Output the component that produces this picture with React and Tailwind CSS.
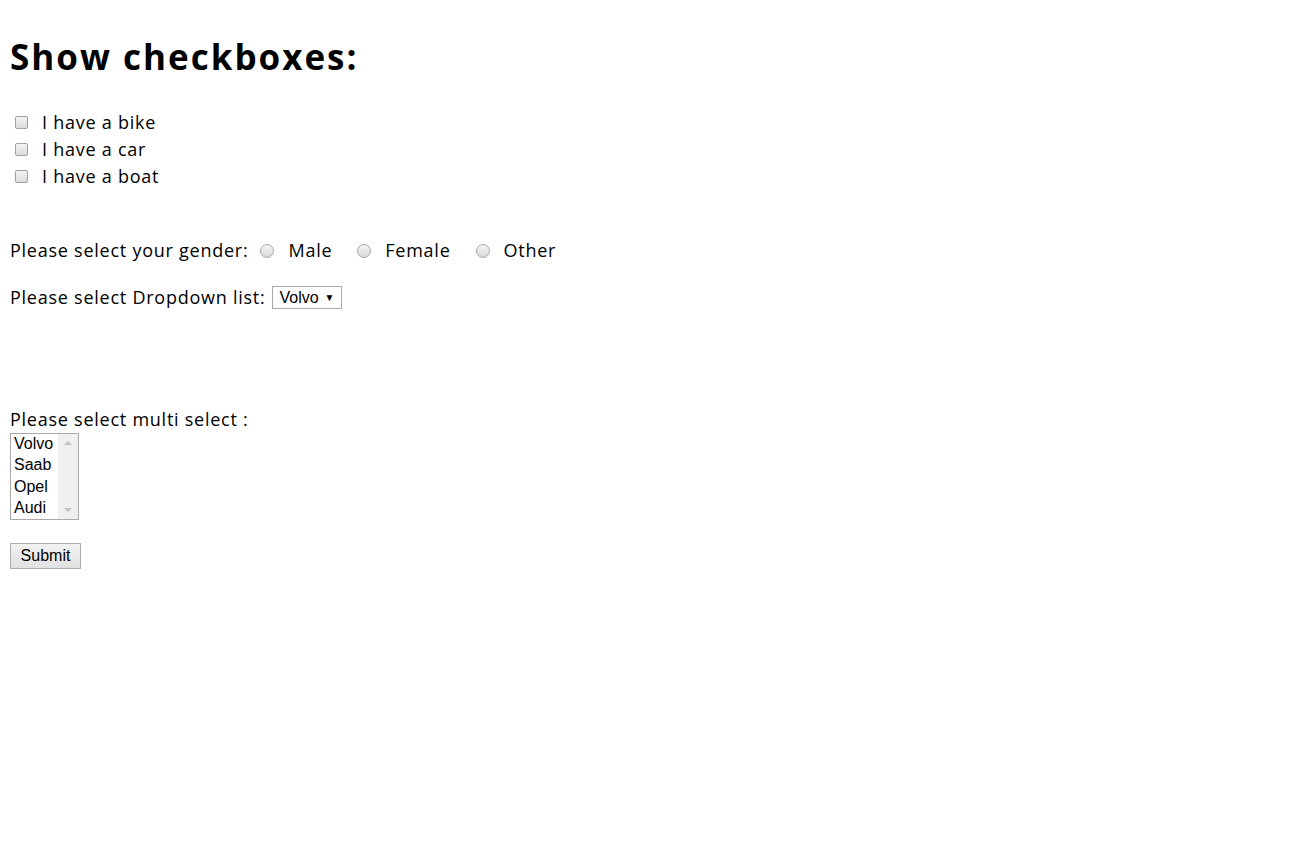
export default function App() {
  const Box = () => (
    <span className="inline-block w-[13px] h-[13px] border border-[#a0a0a0] rounded-[2px] bg-gradient-to-b from-[#f4f4f4] to-[#dcdcdc] shrink-0" />
  );
  const Radio = () => (
    <span className="inline-block w-[14px] h-[14px] border border-[#a8a8a8] rounded-full bg-gradient-to-b from-[#f6f6f6] to-[#d8d8d8] shrink-0" />
  );
  const cars = ["Volvo", "Saab", "Opel", "Audi"];

  return (
    <div
      className="min-h-screen bg-white text-black px-[10px] text-[18px] tracking-[0.75px]"
      style={{ fontFamily: '"Open Sans", "Noto Sans CJK KR", sans-serif' }}
    >
      <h1 className="text-[35px] font-bold leading-[40px] pt-[37px] pb-[32px] tracking-[2px]">Show checkboxes:</h1>

      <div className="flex flex-col">
        {["I have a bike", "I have a car", "I have a boat"].map((t) => (
          <div key={t} className="flex items-center h-[27px]">
            <span className="ml-[5px] mr-[14px] flex">
              <Box />
            </span>
            <span className="leading-[27px]">{t}</span>
          </div>
        ))}
      </div>

      <div className="flex items-center h-[27px] mt-[47px]">
        <span>Please select your gender:</span>
        {["Male", "Female", "Other"].map((g) => (
          <span key={g} className="flex items-center">
            <span className="ml-[12px] mr-[14px] flex">
              <Radio />
            </span>
            <span className="mr-[13px]">{g}</span>
          </span>
        ))}
      </div>

      <div className="flex items-center h-[27px] mt-[20px]">
        <span>Please select Dropdown list:</span>
        <span
          className="ml-[7px] flex items-center gap-[6px] h-[23px] border border-[#a9a9a9] bg-white pl-[6px] pr-[6px] text-[16px] tracking-normal"
          style={{ fontFamily: '"Liberation Sans", Arial, sans-serif' }}
        >
          <span>Volvo</span>
          <span className="text-[10px]">▼</span>
        </span>
      </div>

      <div className="h-[27px] mt-[95px] leading-[27px]">Please select multi select :</div>
      <div
        className="flex w-[69px] h-[87px] border border-[#a9a9a9] text-[16px] tracking-normal overflow-hidden"
        style={{ fontFamily: '"Liberation Sans", Arial, sans-serif' }}
      >
        <div className="flex-1 flex flex-col pl-[3px] -mt-[1px]">
          {cars.map((c) => (
            <div key={c} className="h-[21.33px] leading-[21.33px]">{c}</div>
          ))}
        </div>
        <div className="w-[20px] bg-[#f0f0f0] flex flex-col justify-between items-center py-[7px]">
          <span className="w-0 h-0 border-l-[4px] border-r-[4px] border-b-[4px] border-l-transparent border-r-transparent border-b-[#c2c2c2]" />
          <span className="w-0 h-0 border-l-[4px] border-r-[4px] border-t-[4px] border-l-transparent border-r-transparent border-t-[#c2c2c2]" />
        </div>
      </div>

      <button
        className="mt-[23px] w-[71px] h-[26px] border border-[#adadad] bg-gradient-to-b from-[#f2f2f2] to-[#e1e1e1] text-[16px] leading-none tracking-normal"
        style={{ fontFamily: '"Liberation Sans", Arial, sans-serif' }}
      >
        Submit
      </button>
    </div>
  );
}
